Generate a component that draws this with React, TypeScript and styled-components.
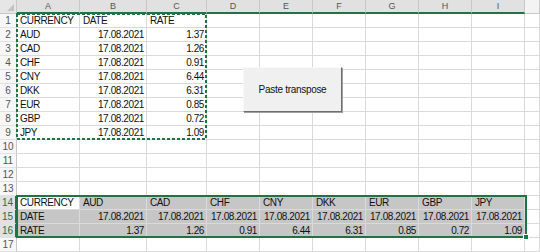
import React from "react";
import styled, { createGlobalStyle, css } from "styled-components";

const green = "#217346";
const grid = "#dadada";

const columns = ["A", "B", "C", "D", "E", "F", "G", "H", "I", ""];

type CellData = { text: string; num?: boolean };

const source: [string, string, string][] = [
  ["AUD", "17.08.2021", "1.37"],
  ["CAD", "17.08.2021", "1.26"],
  ["CHF", "17.08.2021", "0.91"],
  ["CNY", "17.08.2021", "6.44"],
  ["DKK", "17.08.2021", "6.31"],
  ["EUR", "17.08.2021", "0.85"],
  ["GBP", "17.08.2021", "0.72"],
  ["JPY", "17.08.2021", "1.09"],
];

function buildRows(): CellData[][] {
  const rows: CellData[][] = [];
  const empty = (): CellData[] => columns.map(() => ({ text: "" }));
  const r1 = empty();
  r1[0] = { text: "CURRENCY" };
  r1[1] = { text: "DATE" };
  r1[2] = { text: "RATE" };
  rows.push(r1);
  source.forEach(([cur, date, rate]) => {
    const r = empty();
    r[0] = { text: cur };
    r[1] = { text: date, num: true };
    r[2] = { text: rate, num: true };
    rows.push(r);
  });
  for (let i = 10; i <= 13; i++) rows.push(empty());
  const r14 = empty();
  const r15 = empty();
  const r16 = empty();
  r14[0] = { text: "CURRENCY" };
  r15[0] = { text: "DATE" };
  r16[0] = { text: "RATE" };
  source.forEach(([cur, date, rate], i) => {
    r14[i + 1] = { text: cur };
    r15[i + 1] = { text: date, num: true };
    r16[i + 1] = { text: rate, num: true };
  });
  rows.push(r14, r15, r16);
  rows.push(empty());
  return rows;
}

const rows = buildRows();

function App() {
  return (
    <>
      <GlobalStyle />
      <Sheet>
        <Corner />
        {columns.map((c, i) => (
          <ColHeader key={`h${i}`} $active={c !== ""}>
            {c}
          </ColHeader>
        ))}
        {rows.map((row, r) => {
          const n = r + 1;
          const inSel = n >= 14 && n <= 16;
          return (
            <React.Fragment key={n}>
              <RowHeader $active={inSel}>{n}</RowHeader>
              {row.map((cell, c) => (
                <Cell
                  key={c}
                  $num={cell.num}
                  $selected={inSel && c < 9 && !(n === 14 && c === 0)}
                >
                  {cell.text}
                </Cell>
              ))}
            </React.Fragment>
          );
        })}
        {/* copy marquee around A1:C9 */}
        <Marquee width="191" height="127" viewBox="0 0 191 127">
          <rect
            x="1"
            y="1"
            width="189"
            height="125"
            fill="none"
            stroke={green}
            strokeWidth="2"
            strokeDasharray="3 2"
          />
        </Marquee>
        <Selection />
        <FillHandle />
        <Button>Paste transpose</Button>
      </Sheet>
    </>
  );
}

const GlobalStyle = createGlobalStyle`
  html, body {
    margin: 0;
    padding: 0;
    background: #ffffff;
    overflow: hidden;
  }
`;

const Sheet = styled.div`
  position: relative;
  display: grid;
  grid-template-columns: 17px 63px 67px 60px repeat(6, 53px) 1fr;
  grid-auto-rows: 14px;
  width: 540px;
  height: 252px;
  overflow: hidden;
  font-family: "Liberation Sans", Arial, sans-serif;
  font-size: 10px;
  letter-spacing: -0.4px;
  color: #111111;
`;

const Corner = styled.div`
  position: relative;
  box-sizing: border-box;
  background: #e6e6e6;
  border-right: 1px solid #c8c8c8;
  border-bottom: 1px solid #c8c8c8;
  &::after {
    content: "";
    position: absolute;
    right: 2px;
    bottom: 2px;
    border-left: 7px solid transparent;
    border-bottom: 7px solid #c3c3c3;
  }
`;

const ColHeader = styled.div<{ $active: boolean }>`
  box-sizing: border-box;
  display: flex;
  align-items: center;
  justify-content: center;
  font-size: 9px;
  letter-spacing: 0;
  color: #555555;
  border-right: 1px solid #c8c8c8;
  ${({ $active }) =>
    $active
      ? css`
          background: #e1e1e1;
          border-bottom: 2px solid ${green};
        `
      : css`
          background: #f3f3f3;
          border-bottom: 1px solid #c8c8c8;
        `}
`;

const RowHeader = styled.div<{ $active: boolean }>`
  box-sizing: border-box;
  display: flex;
  align-items: center;
  justify-content: center;
  font-size: 10px;
  letter-spacing: 0;
  border-bottom: 1px solid #e2e2e2;
  ${({ $active }) =>
    $active
      ? css`
          background: #e1e1e1;
          color: ${green};
          border-right: 2px solid ${green};
        `
      : css`
          background: #f7f7f7;
          color: #555555;
          border-right: 1px solid #c8c8c8;
        `}
`;

const Cell = styled.div<{ $num?: boolean; $selected: boolean }>`
  box-sizing: border-box;
  display: flex;
  align-items: center;
  justify-content: ${({ $num }) => ($num ? "flex-end" : "flex-start")};
  padding: 0 2px 0 3px;
  white-space: nowrap;
  line-height: 13px;
  border-right: 1px solid ${grid};
  border-bottom: 1px solid ${grid};
  background: ${({ $selected }) => ($selected ? "#c6c6c6" : "#ffffff")};
`;

const Marquee = styled.svg`
  position: absolute;
  left: 16px;
  top: 13px;
`;

const Selection = styled.div`
  position: absolute;
  left: 16px;
  top: 195px;
  width: 511px;
  height: 43px;
  box-sizing: border-box;
  border: 2px solid ${green};
  pointer-events: none;
`;

const FillHandle = styled.div`
  position: absolute;
  left: 523px;
  top: 234px;
  width: 6px;
  height: 6px;
  box-sizing: border-box;
  background: ${green};
  border: 1px solid #ffffff;
`;

const Button = styled.div`
  position: absolute;
  left: 243px;
  top: 67px;
  width: 99px;
  height: 45px;
  box-sizing: border-box;
  display: flex;
  align-items: center;
  justify-content: center;
  background: #f0f0f0;
  border-top: 1px solid #f8f8f8;
  border-left: 1px solid #f8f8f8;
  border-right: 1px solid #6e6e6e;
  border-bottom: 1px solid #6e6e6e;
  box-shadow: 1px 1px 0 #a0a0a0;
  font-size: 10px;
  letter-spacing: -0.3px;
  color: #111111;
`;

export default App;
